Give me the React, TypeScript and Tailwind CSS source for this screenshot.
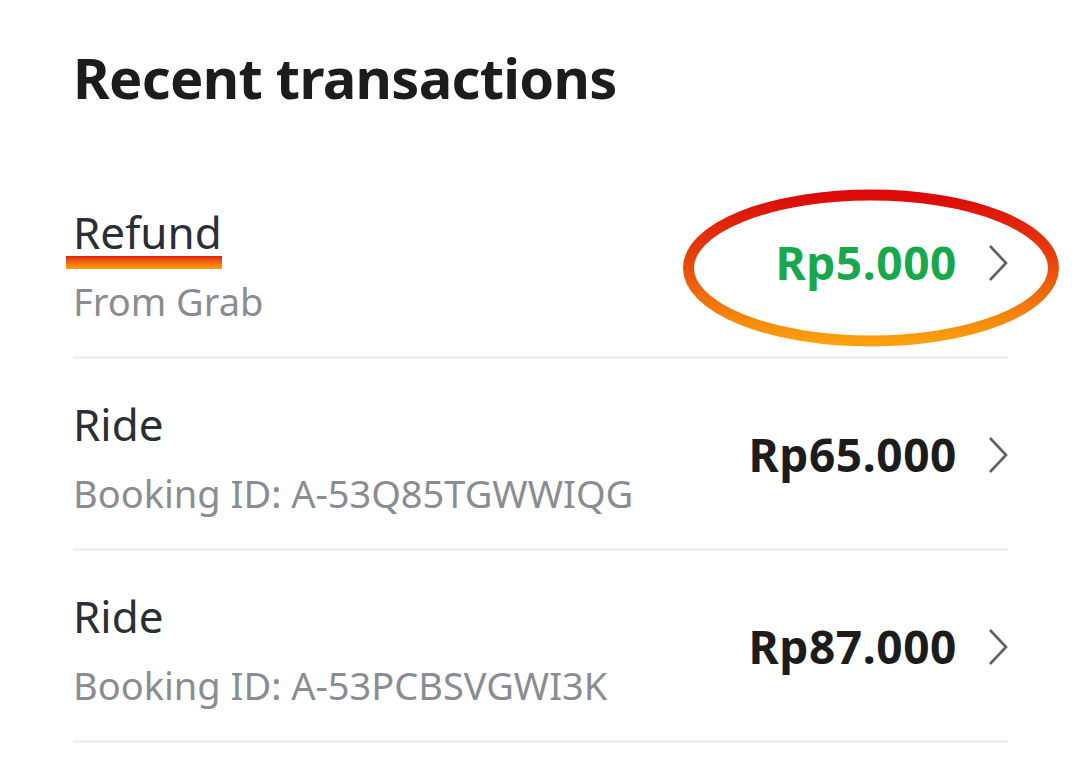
import React from "react";

const Chevron = () => (
  <svg width="20" height="38" viewBox="0 0 20 38" className="shrink-0">
    <path d="M2 2 L18 19 L2 36" fill="none" stroke="#5f6166" strokeWidth="2.6" />
  </svg>
);

type Row = { title: string; sub: string; amount: string; green?: boolean };

const rows: Row[] = [
  { title: "Refund", sub: "From Grab", amount: "Rp5.000", green: true },
  { title: "Ride", sub: "Booking ID: A-53Q85TGWWIQG", amount: "Rp65.000" },
  { title: "Ride", sub: "Booking ID: A-53PCBSVGWI3K", amount: "Rp87.000" },
];

export default function App() {
  return (
    <div
      className="w-[1080px] h-[772px] bg-white overflow-hidden"
      style={{ fontFamily: '"Noto Sans", sans-serif' }}
    >
      <div className="pl-[73px] pr-[72px]">
        <h1 className="pt-[37px] text-[56px] leading-[80px] font-bold text-[#1c1c1c] tracking-[-0.7px]">
          Recent transactions
        </h1>
        <div className="mt-[50px]">
          {rows.map((r, i) => (
            <div
              key={i}
              className="relative flex items-center justify-between h-[192px] border-b-[3px] border-[#edf0f2] pt-[2px]"
            >
              <div className="flex flex-col pt-[10px]">
                <div className="relative text-[44px] leading-[66px] text-[#2a2e35]">
                  {r.title}
                  {r.green && (
                    <div className="absolute left-[-7px] top-[57px] w-[156px] h-[13px] bg-gradient-to-b from-[#e0140f] to-[#f9a10d]" />
                  )}
                </div>
                <div className="text-[38px] leading-[72px] text-[#898d93]">{r.sub}</div>
              </div>
              <div className="flex items-center gap-[31px]">
                <span
                  className={`text-[46px] font-bold tracking-[0.6px] ${
                    r.green ? "text-[#17a84c]" : "text-[#1c1c1c]"
                  }`}
                >
                  {r.amount}
                </span>
                <Chevron />
              </div>
              {r.green && (
                <svg
                  className="absolute left-[600px] top-[16px]"
                  width="396"
                  height="170"
                  viewBox="0 0 396 170"
                >
                  <defs>
                    <linearGradient id="eg" x1="0" y1="0" x2="0" y2="1">
                      <stop offset="0" stopColor="#dc0a0a" />
                      <stop offset="0.45" stopColor="#e8440a" />
                      <stop offset="1" stopColor="#fba00c" />
                    </linearGradient>
                  </defs>
                  <ellipse cx="198" cy="85" rx="182.5" ry="73" fill="none" stroke="url(#eg)" strokeWidth="11" />
                </svg>
              )}
            </div>
          ))}
        </div>
      </div>
    </div>
  );
}
